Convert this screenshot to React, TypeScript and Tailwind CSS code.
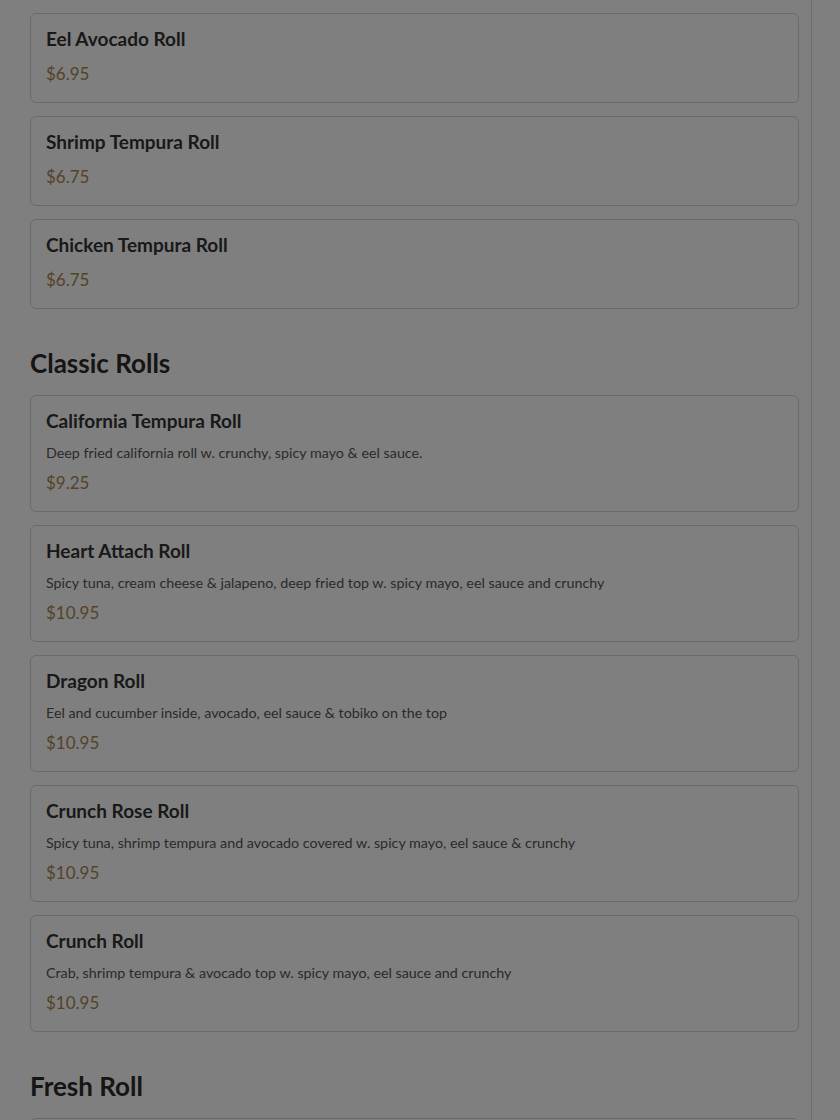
type Item = { name: string; desc?: string; price: string };

const topItems: Item[] = [
  { name: 'Eel Avocado Roll', price: '$6.95' },
  { name: 'Shrimp Tempura Roll', price: '$6.75' },
  { name: 'Chicken Tempura Roll', price: '$6.75' },
];

const classic: Item[] = [
  { name: 'California Tempura Roll', desc: 'Deep fried california roll w. crunchy, spicy mayo & eel sauce.', price: '$9.25' },
  { name: 'Heart Attach Roll', desc: 'Spicy tuna, cream cheese & jalapeno, deep fried top w. spicy mayo, eel sauce and crunchy', price: '$10.95' },
  { name: 'Dragon Roll', desc: 'Eel and cucumber inside, avocado, eel sauce & tobiko on the top', price: '$10.95' },
  { name: 'Crunch Rose Roll', desc: 'Spicy tuna, shrimp tempura and avocado covered w. spicy mayo, eel sauce & crunchy', price: '$10.95' },
  { name: 'Crunch Roll', desc: 'Crab, shrimp tempura & avocado top w. spicy mayo, eel sauce and crunchy', price: '$10.95' },
];

const fresh: Item[] = [
  { name: 'Rainbow Roll', desc: 'California roll topped with assorted fish', price: '$10.95' },
];

function MenuCard({ item }: { item: Item }) {
  return (
    <div className="mb-[13px] rounded-md border border-[#d4d4d4] bg-white px-[15px] pt-[15px] pb-4">
      <h3 className="text-[19px] font-bold leading-5 text-[#333]">{item.name}</h3>
      {item.desc && <p className="mt-3 text-[14.3px] leading-5 text-[#555]">{item.desc}</p>}
      <div className={`${item.desc ? 'mt-2' : 'mt-[13px]'} text-[17px] leading-6 text-[#a8864f]`}>{item.price}</div>
    </div>
  );
}

function Section({ title, items }: { title: string; items: Item[] }) {
  return (
    <section className="mt-[38px]">
      <h2 className="mb-4 text-[26px] font-bold leading-8 text-[#2a2a2a]">{title}</h2>
      {items.map((it) => (
        <MenuCard key={it.name} item={it} />
      ))}
    </section>
  );
}

export default function App() {
  return (
    <div className="relative min-h-screen bg-white" style={{ fontFamily: 'Lato, "Noto Sans", sans-serif' }}>
      <div className="min-h-screen w-[812px] border-r border-[#dcdcdc] pl-[30px] pr-[12px] pt-[13px]">
        {topItems.map((it) => (
          <MenuCard key={it.name} item={it} />
        ))}
        <Section title="Classic Rolls" items={classic} />
        <Section title="Fresh Roll" items={fresh} />
      </div>
      <div className="fixed inset-0 bg-black/50" />
    </div>
  );
}
